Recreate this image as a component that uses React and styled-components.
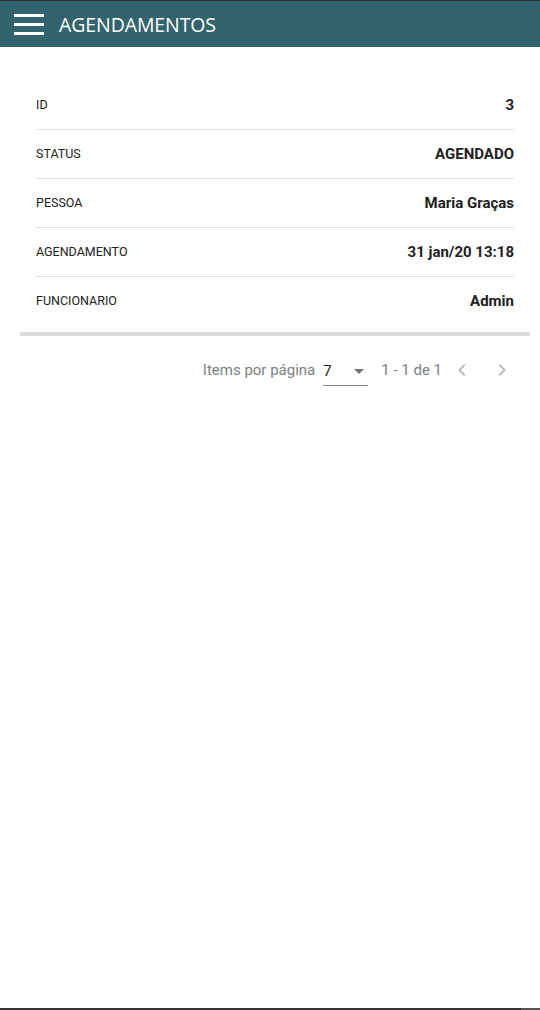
import styled, { createGlobalStyle } from "styled-components";

const GlobalStyle = createGlobalStyle`
  html, body {
    margin: 0;
    padding: 0;
    background: #ffffff;
    font-family: Roboto, "Liberation Sans", sans-serif;
  }
`;

const Page = styled.div`
  width: 540px;
  height: 1010px;
  display: flex;
  flex-direction: column;
  border-top: 1px solid #2b2b2b;
  box-sizing: border-box;
`;

const Toolbar = styled.header`
  height: 46px;
  background-color: #33636d;
  display: flex;
  align-items: center;
  padding: 0 14px;
  gap: 15px;
  color: #ffffff;
`;

const MenuIcon = styled.div`
  width: 30px;
  display: flex;
  flex-direction: column;
  gap: 6px;

  span {
    display: block;
    height: 3px;
    background: #ffffff;
  }
`;

const Title = styled.h1`
  margin: 0;
  font-family: "Open Sans", sans-serif;
  font-size: 19.5px;
  font-weight: 400;
  letter-spacing: -0.1px;
`;

const Main = styled.main`
  flex: 1;
  padding: 34px 10px 0 20px;
`;

const Card = styled.section`
  padding: 0 16px 7px;
  border-bottom: 4px solid #dcdcdc;
`;

const DetailList = styled.dl`
  margin: 0;
`;

const DetailRow = styled.div`
  display: flex;
  align-items: center;
  justify-content: space-between;
  height: 48px;
  border-bottom: 1px solid #e0e0e0;

  &:last-child {
    border-bottom: none;
  }
`;

const Label = styled.dt`
  font-size: 12.5px;
  color: #212121;
  margin-top: -2px;
`;

const Value = styled.dd`
  margin: 0;
  font-size: 15px;
  font-weight: 700;
  color: #212121;
`;

const Paginator = styled.div`
  display: flex;
  align-items: center;
  justify-content: flex-end;
  padding: 18px 8px 0;
  height: 32px;
  font-size: 15px;
  color: #7a7f86;
`;

const PageSizeLabel = styled.span`
  margin-right: 8px;
`;

const Select = styled.div`
  width: 45px;
  height: 28px;
  box-sizing: border-box;
  border-bottom: 1px solid #8a8a8a;
  display: flex;
  align-items: center;
  justify-content: space-between;
  color: #212121;
  font-size: 15px;
  margin-top: 4px;
  padding-bottom: 1px;
`;

const Caret = styled.span`
  width: 0;
  height: 0;
  border-left: 5px solid transparent;
  border-right: 5px solid transparent;
  border-top: 5px solid #757575;
  margin-right: 4px;
`;

const RangeLabel = styled.span`
  margin: 0 0 0 13px;
`;

const NavButton = styled.button`
  width: 40px;
  height: 40px;
  border: none;
  background: none;
  padding: 0;
  display: flex;
  align-items: center;
  justify-content: center;
  color: #bdbdbd;
`;

const BottomEdge = styled.div`
  height: 2px;
  display: flex;

  span {
    flex: 1;
    background: #333333;
  }
  span + span {
    flex: 0 0 19px;
    background: #555555;
  }
`;

const details = [
  { label: "ID", value: "3" },
  { label: "STATUS", value: "AGENDADO" },
  { label: "PESSOA", value: "Maria Graças" },
  { label: "AGENDAMENTO", value: "31 jan/20 13:18" },
  { label: "FUNCIONARIO", value: "Admin" },
];

function Chevron({ dir }) {
  return (
    <svg width="24" height="24" viewBox="0 0 24 24" fill="currentColor">
      {dir === "left" ? (
        <path d="M15.41 7.41 14 6l-6 6 6 6 1.41-1.41L10.83 12z" />
      ) : (
        <path d="M10 6 8.59 7.41 13.17 12l-4.58 4.59L10 18l6-6z" />
      )}
    </svg>
  );
}

export default function App() {
  return (
    <>
      <GlobalStyle />
      <Page>
        <Toolbar>
          <MenuIcon>
            <span />
            <span />
            <span />
          </MenuIcon>
          <Title>AGENDAMENTOS</Title>
        </Toolbar>
        <Main>
          <Card>
            <DetailList>
              {details.map((d) => (
                <DetailRow key={d.label}>
                  <Label>{d.label}</Label>
                  <Value>{d.value}</Value>
                </DetailRow>
              ))}
            </DetailList>
          </Card>
          <Paginator>
            <PageSizeLabel>Items por página</PageSizeLabel>
            <Select>
              7
              <Caret />
            </Select>
            <RangeLabel>1 - 1 de 1</RangeLabel>
            <NavButton>
              <Chevron dir="left" />
            </NavButton>
            <NavButton>
              <Chevron dir="right" />
            </NavButton>
          </Paginator>
        </Main>
        <BottomEdge>
          <span />
          <span />
        </BottomEdge>
      </Page>
    </>
  );
}
